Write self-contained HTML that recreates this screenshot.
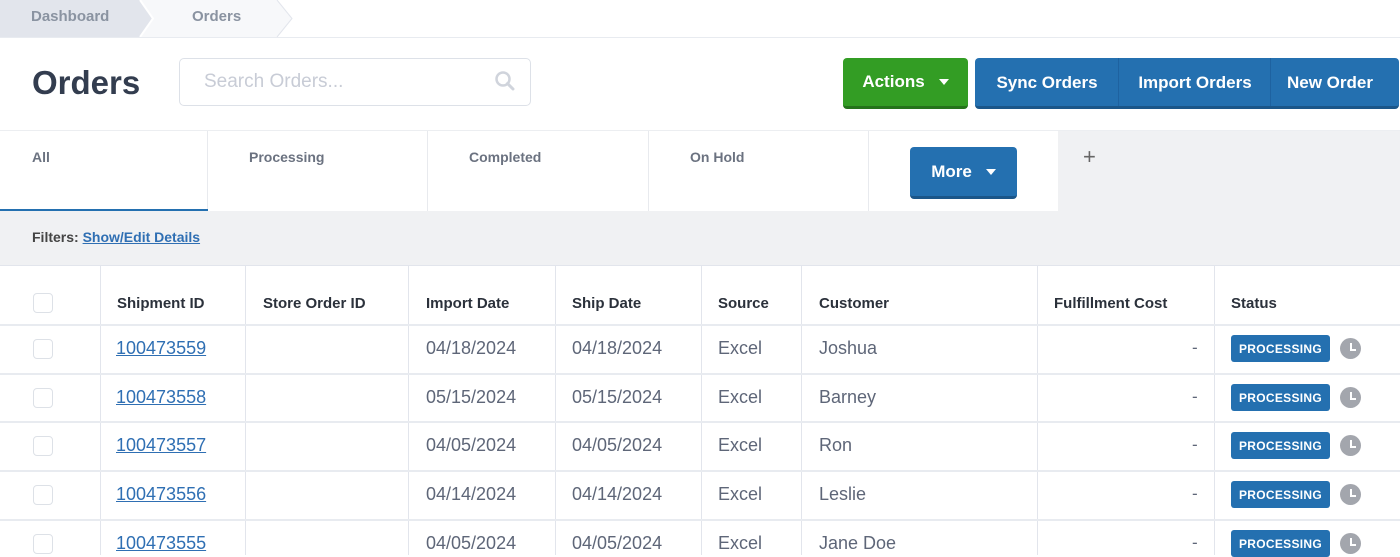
<!DOCTYPE html>
<html><head><meta charset="utf-8"><style>
*{margin:0;padding:0;box-sizing:border-box}
body{width:1400px;height:555px;overflow:hidden;background:#fff;font-family:"Liberation Sans",Arial,sans-serif;position:relative}
.a{position:absolute}
.bc{font-size:15px;color:#8a93a1;font-weight:bold}
.btn{position:absolute;color:#fff;font-weight:bold;font-size:17px;display:flex;align-items:center;justify-content:center;border-radius:4px}
.tab{position:absolute;top:131px;height:80px;border-right:1px solid #e8eaee;font-size:14px;font-weight:bold;color:#6b7280;padding-top:18px}
.th{position:absolute;top:295px;font-size:15px;font-weight:bold;color:#2b313b}
.vl{position:absolute;top:266px;width:1px;height:289px;background:#e2e5ec}
.hl{position:absolute;left:0;width:1400px;height:2px;background:#e8ebf0}
.c{position:absolute;font-size:18px;color:#5e6678}
.lnk{color:#2f6fb3;text-decoration:underline}
.cb{position:absolute;left:33px;width:20px;height:20px;border:1px solid #dde1e7;border-radius:4px;background:#fff}
.badge{position:absolute;left:1231px;width:99px;height:27px;background:#2470b0;border-radius:3px;color:#fff;font-size:12px;font-weight:bold;display:flex;align-items:center;justify-content:center;letter-spacing:.3px}
.clk{position:absolute;left:1340px;width:21px;height:21px;border-radius:50%;background:#a3a6ad}
.clk:after{content:"";position:absolute;left:10px;top:5px;width:4px;height:6px;border-left:2px solid #fff;border-bottom:2px solid #fff}
.dash{position:absolute;left:1192px;font-size:17px;color:#5e6678}
</style></head><body>
<svg class="a" style="left:0;top:0" width="300" height="38">
<polygon points="0,0 145,0 158,18.5 145,37 0,37" fill="#e2e5ec"/>
<polygon points="140,0 277,0 292,18.5 277,37 140,37 153,18.5" fill="#f7f8fa"/>
<polyline points="140,0 153,18.5 140,37" fill="none" stroke="#fff" stroke-width="2"/>
<polyline points="277,0 292,18.5 277,37" fill="none" stroke="#e2e5ec" stroke-width="1"/>
</svg>
<div class="a bc" style="left:31px;top:8px">Dashboard</div>
<div class="a bc" style="left:192px;top:8px">Orders</div>
<div class="a" style="left:0;top:37px;width:1400px;height:1px;background:#e8ebf0"></div>
<div class="a" style="left:32px;top:64px;font-size:33px;font-weight:bold;color:#333d4f">Orders</div>
<div class="a" style="left:179px;top:58px;width:352px;height:48px;border:1px solid #dde1e8;border-radius:5px"></div>
<div class="a" style="left:204px;top:71px;font-size:19px;color:#c8ccd6">Search Orders...</div>
<svg class="a" style="left:494px;top:70px" width="22" height="22"><circle cx="9" cy="9" r="6.5" fill="none" stroke="#d0d4dc" stroke-width="2.5"/><line x1="13.5" y1="13.5" x2="19" y2="19" stroke="#d0d4dc" stroke-width="3" stroke-linecap="round"/></svg>
<div class="btn" style="left:843px;top:58px;width:125px;height:51px;background:#339d24;border-bottom:3px solid #24731a">Actions<span style="margin-left:14px;border:5px solid transparent;border-top:6px solid #fff;margin-top:5px"></span></div>
<div class="a" style="left:975px;top:58px;width:424px;height:51px;background:#2470b0;border-bottom:3px solid #1b5689;border-radius:4px"></div>
<div class="a" style="left:1118px;top:58px;width:1px;height:48px;background:#1e62a0"></div>
<div class="a" style="left:1270px;top:58px;width:1px;height:48px;background:#1e62a0"></div>
<div class="btn" style="left:975px;top:59px;width:144px;height:48px">Sync Orders</div>
<div class="btn" style="left:1119px;top:59px;width:152px;height:48px">Import Orders</div>
<div class="btn" style="left:1271px;top:59px;width:118px;height:48px">New Order</div>
<div class="a" style="left:0;top:130px;width:1400px;height:1px;background:#eceef1"></div>
<div class="a" style="left:1058px;top:131px;width:342px;height:80px;background:#f0f1f3"></div>
<div class="tab" style="left:0;width:208px;padding-left:32px">All</div>
<div class="a" style="left:0;top:209px;width:208px;height:2px;background:#2470b0"></div>
<div class="tab" style="left:208px;width:220px;padding-left:41px">Processing</div>
<div class="tab" style="left:428px;width:221px;padding-left:41px">Completed</div>
<div class="tab" style="left:649px;width:220px;padding-left:41px">On Hold</div>
<div class="tab" style="left:869px;width:189px;border-right:none"></div>
<div class="btn" style="left:910px;top:147px;width:107px;height:52px;background:#2470b0;border-bottom:3px solid #1b5689">More<span style="margin-left:14px;border:5px solid transparent;border-top:6px solid #fff;margin-top:6px"></span></div>
<div class="a" style="left:1083px;top:144px;font-size:22px;color:#666">+</div>
<div class="a" style="left:0;top:211px;width:1400px;height:54px;background:#f0f1f3"></div>
<div class="a" style="left:32px;top:229px;font-size:14px;font-weight:bold;color:#444"><span>Filters: </span><span style="color:#2f6fb3;text-decoration:underline">Show/Edit Details</span></div>
<div class="a" style="left:0;top:265px;width:1400px;height:1px;background:#e2e5ec"></div>
<div class="vl" style="left:100px"></div><div class="vl" style="left:245px"></div><div class="vl" style="left:408px"></div><div class="vl" style="left:555px"></div><div class="vl" style="left:701px"></div><div class="vl" style="left:801px"></div><div class="vl" style="left:1037px"></div><div class="vl" style="left:1214px"></div>
<div class="hl" style="top:324px"></div><div class="hl" style="top:373px"></div><div class="hl" style="top:421px"></div><div class="hl" style="top:470px"></div><div class="hl" style="top:519px"></div>
<div class="cb" style="top:293px"></div>
<div class="th" style="left:117px">Shipment ID</div>
<div class="th" style="left:263px">Store Order ID</div>
<div class="th" style="left:426px">Import Date</div>
<div class="th" style="left:572px">Ship Date</div>
<div class="th" style="left:718px">Source</div>
<div class="th" style="left:819px">Customer</div>
<div class="th" style="left:1054px">Fulfillment Cost</div>
<div class="th" style="left:1231px">Status</div>

<div class="cb" style="top:339px"></div><div class="c lnk" style="left:116px;top:338px">100473559</div><div class="c" style="left:426px;top:338px">04/18/2024</div><div class="c" style="left:572px;top:338px">04/18/2024</div><div class="c" style="left:718px;top:338px">Excel</div><div class="c" style="left:819px;top:338px">Joshua</div><div class="dash" style="top:338px">-</div><div class="badge" style="top:335px">PROCESSING</div><div class="clk" style="top:338px"></div>

<div class="cb" style="top:388px"></div><div class="c lnk" style="left:116px;top:387px">100473558</div><div class="c" style="left:426px;top:387px">05/15/2024</div><div class="c" style="left:572px;top:387px">05/15/2024</div><div class="c" style="left:718px;top:387px">Excel</div><div class="c" style="left:819px;top:387px">Barney</div><div class="dash" style="top:387px">-</div><div class="badge" style="top:384px">PROCESSING</div><div class="clk" style="top:387px"></div>

<div class="cb" style="top:436px"></div><div class="c lnk" style="left:116px;top:435px">100473557</div><div class="c" style="left:426px;top:435px">04/05/2024</div><div class="c" style="left:572px;top:435px">04/05/2024</div><div class="c" style="left:718px;top:435px">Excel</div><div class="c" style="left:819px;top:435px">Ron</div><div class="dash" style="top:435px">-</div><div class="badge" style="top:432px">PROCESSING</div><div class="clk" style="top:435px"></div>

<div class="cb" style="top:485px"></div><div class="c lnk" style="left:116px;top:484px">100473556</div><div class="c" style="left:426px;top:484px">04/14/2024</div><div class="c" style="left:572px;top:484px">04/14/2024</div><div class="c" style="left:718px;top:484px">Excel</div><div class="c" style="left:819px;top:484px">Leslie</div><div class="dash" style="top:484px">-</div><div class="badge" style="top:481px">PROCESSING</div><div class="clk" style="top:484px"></div>

<div class="cb" style="top:534px"></div><div class="c lnk" style="left:116px;top:533px">100473555</div><div class="c" style="left:426px;top:533px">04/05/2024</div><div class="c" style="left:572px;top:533px">04/05/2024</div><div class="c" style="left:718px;top:533px">Excel</div><div class="c" style="left:819px;top:533px">Jane Doe</div><div class="dash" style="top:533px">-</div><div class="badge" style="top:530px">PROCESSING</div><div class="clk" style="top:533px"></div>
</body></html>
